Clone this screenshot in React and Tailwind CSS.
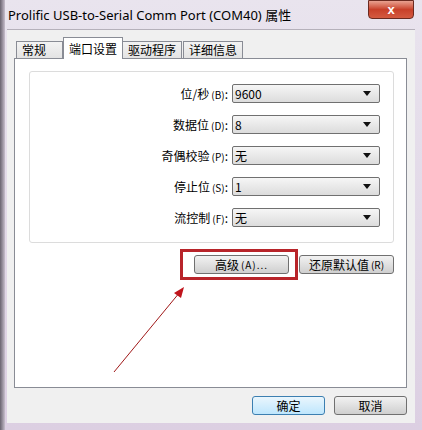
import React from "react";

const cjk = "font-['SimSun','Noto_Sans_CJK_SC',sans-serif]";

const rows = [
    { label: "位/秒", key: "B", value: "9600" },
    { label: "数据位", key: "D", value: "8" },
    { label: "奇偶校验", key: "P", value: "无" },
    { label: "停止位", key: "S", value: "1" },
    { label: "流控制", key: "F", value: "无" },
];

const tabs = ["常规", "端口设置", "驱动程序", "详细信息"];

const Select = ({ value }) => (
    <div className="flex items-center w-[148px] h-[19px] border border-[#707070] rounded-[2px] bg-gradient-to-b from-[#f6f6f6] to-[#dcdcdc] pl-[2px] pr-[8px]">
        <span className="flex-1 text-[12px] leading-none text-black font-['Noto_Sans_CJK_SC',sans-serif]">
            {value}
        </span>
        <svg width="8" height="5" viewBox="0 0 8 5">
            <path d="M0 0h8L4 5z" fill="#111" />
        </svg>
    </div>
);

const Button = ({ children, w, primary }) => (
    <div
        className={`flex items-center justify-center h-[19px] rounded-[3px] border text-[12px] leading-none text-black ${cjk} ${
            primary
                ? "border-[#3c7fb1] bg-gradient-to-b from-[#eaf6fd] to-[#bee6fd]"
                : "border-[#707070] bg-gradient-to-b from-[#f2f2f2] to-[#cfcfcf]"
        } ${w}`}
    >
        {children}
    </div>
);

export default function App() {
    return (
        <div className="relative w-[422px] h-[430px] overflow-hidden bg-gradient-to-b from-[#e9e4ee] to-[#dccfe2] flex flex-col">
            {/* Title bar */}
            <div className="h-[29px] flex items-start justify-between pl-[8px] pr-[8px]">
                <span className="mt-[6px] text-[13px] text-black font-['Noto_Sans','Noto_Sans_CJK_SC',sans-serif]">
                    Prolific USB-to-Serial Comm Port (COM40) 属性
                </span>
                <div className="w-[46px] h-[19px] rounded-b-[4px] border border-[#6b2a20] bg-gradient-to-b from-[#e8a090] via-[#c8402a] to-[#d45a40] flex items-center justify-center">
                    <span className="text-white text-[13px] font-bold leading-none font-['Liberation_Sans',sans-serif]">
                        x
                    </span>
                </div>
            </div>

            {/* Client area */}
            <div className="mx-[7px] h-[394px] bg-[#f0f0f0] border-t border-[#b5b0ba] flex flex-col px-[7px] pt-[7px]">
                {/* Tabs */}
                <div className="flex items-end h-[21px] pl-[2px]">
                    {tabs.map((t, i) =>
                        i === 1 ? (
                            <div
                                key={t}
                                className={`h-[22px] -mb-px z-10 px-[5px] bg-white border border-b-0 border-[#898c95] text-[12px] text-black flex items-center ${cjk}`}
                            >
                                {t}
                            </div>
                        ) : (
                            <div
                                key={t}
                                className={`h-[17px] px-[5px] bg-gradient-to-b from-[#f3f3f3] to-[#e3e3e3] border border-b-0 border-[#898c95] text-[12px] text-black flex items-center ${cjk} ${
                                    i === 0 ? "w-[47px]" : ""
                                } ${i === 2 ? "-ml-px" : ""} ${i === 3 ? "ml-px" : ""}`}
                            >
                                {t}
                            </div>
                        )
                    )}
                </div>

                {/* Panel */}
                <div className="w-[393px] h-[330px] bg-white border border-[#898c95] pt-[12px] pl-[14px]">
                    <div className="w-[365px] h-[172px] border border-[#dcdcdc] rounded-[3px] pt-[12px] flex flex-col gap-[12px]">
                        {rows.map((r) => (
                            <div key={r.key} className="flex items-center justify-end pr-[13px] gap-[4px]">
                                <span className={`text-[12px] text-black ${cjk}`}>
                                    {r.label}
                                    <span className="text-[10px] ml-[2px]">({r.key})</span>:
                                </span>
                                <Select value={r.value} />
                            </div>
                        ))}
                    </div>
                    <div className="flex justify-end gap-[10px] w-[365px] mt-[12px]">
                        <Button w="w-[95px]">
                            高级<span className="text-[10px] ml-[2px] tracking-[1px]">(A)...</span>
                        </Button>
                        <Button w="w-[95px]">
                            还原默认值<span className="text-[10px] ml-[2px]">(R)</span>
                        </Button>
                    </div>
                </div>

                {/* Dialog buttons */}
                <div className="flex justify-end gap-[9px] mt-[8px] pr-px">
                    <Button w="w-[73px]" primary>
                        确定
                    </Button>
                    <Button w="w-[73px]">取消</Button>
                </div>
            </div>

            {/* Left frame shadow */}
            <div className="absolute left-0 top-0 w-[5px] h-full bg-gradient-to-r from-[#6a6470] to-[#c8bfcd]" />

            {/* Annotation: highlight box */}
            <div className="absolute left-[180px] top-[249px] w-[118px] h-[31px] border-[3px] border-[#b8242a]" />

            {/* Annotation: arrow */}
            <svg className="absolute left-0 top-0" width="422" height="430">
                <line x1="114" y1="372" x2="180" y2="292" stroke="#a01818" strokeWidth="1" />
                <path d="M184 287 L174 293 L181 298 Z" fill="#c0141c" />
            </svg>
        </div>
    );
}
